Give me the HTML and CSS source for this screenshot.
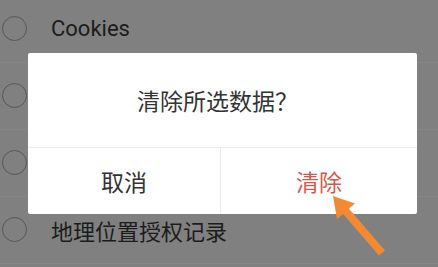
FILE: index.html
```html
<!DOCTYPE html>
<html lang="zh">
<head>
<meta charset="utf-8">
<link rel="stylesheet" href="styles.css">
</head>
<body>
<div class="screen">
  <ul class="list">
    <li class="row"><span class="radio"></span><span class="label"></span></li>
    <li class="row"><span class="radio"></span><span class="label">Cookies</span></li>
    <li class="row"><span class="radio"></span><span class="label">缓存</span></li>
    <li class="row"><span class="radio"></span><span class="label">密码</span></li>
    <li class="row"><span class="radio"></span><span class="label">地理位置授权记录</span></li>
    <li class="row"><span class="radio"></span><span class="label"></span></li>
  </ul>
  <div class="dialog">
    <div class="dialog-title">清除所选数据？</div>
    <div class="dialog-actions">
      <button class="btn">取消</button>
      <button class="btn btn-danger">清除</button>
    </div>
  </div>
  <svg class="pointer" width="438" height="267" viewBox="0 0 438 267">
    <line x1="382" y1="253" x2="344" y2="209" stroke="#f28a33" stroke-width="8" stroke-linecap="butt"/>
    <polygon points="333,196 355,203.5 337,219" fill="#f28a33"/>
  </svg>
</div>
</body>
</html>
```
FILE: styles.css
```css
html, body {
  margin: 0;
  padding: 0;
  background: #808080;
}
.screen {
  position: relative;
  width: 438px;
  height: 267px;
  overflow: hidden;
  background: #808080;
  font-family: "Roboto", "Noto Sans CJK SC", sans-serif;
}
.list {
  list-style: none;
  margin: -71.5px 0 0 0;
  padding: 0;
}
.row {
  display: flex;
  align-items: center;
  height: 66px;
  border-bottom: 1px solid #868686;
  padding-left: 2px;
  gap: 24px;
}
.radio {
  width: 23px;
  height: 23px;
  border: 1.5px solid #575757;
  border-radius: 50%;
  flex: none;
}
.label {
  font-size: 22px;
  color: #1c1c1c;
}
.dialog {
  position: absolute;
  left: 28px;
  top: 53px;
  width: 389px;
  height: 161px;
  background: #fff;
  border-radius: 2px;
  display: flex;
  flex-direction: column;
}
.dialog-title {
  height: 95px;
  display: flex;
  align-items: center;
  justify-content: center;
  font-family: "Noto Sans CJK SC", sans-serif;
  font-size: 23px;
  color: #333;
  border-bottom: 1px solid #ececec;
  padding-right: 10px;
  box-sizing: border-box;
}
.dialog-actions {
  flex: 1;
  display: grid;
  grid-template-columns: 192px 1fr;
}
.btn {
  border: 0;
  background: transparent;
  font-family: "Noto Sans CJK SC", sans-serif;
  font-size: 23px;
  color: #333;
  padding: 0;
  margin: 0;
}
.btn + .btn {
  border-left: 1px solid #ececec;
}
.btn-danger {
  color: #d2584c;
}
.pointer {
  position: absolute;
  left: 0;
  top: 0;
}
```
